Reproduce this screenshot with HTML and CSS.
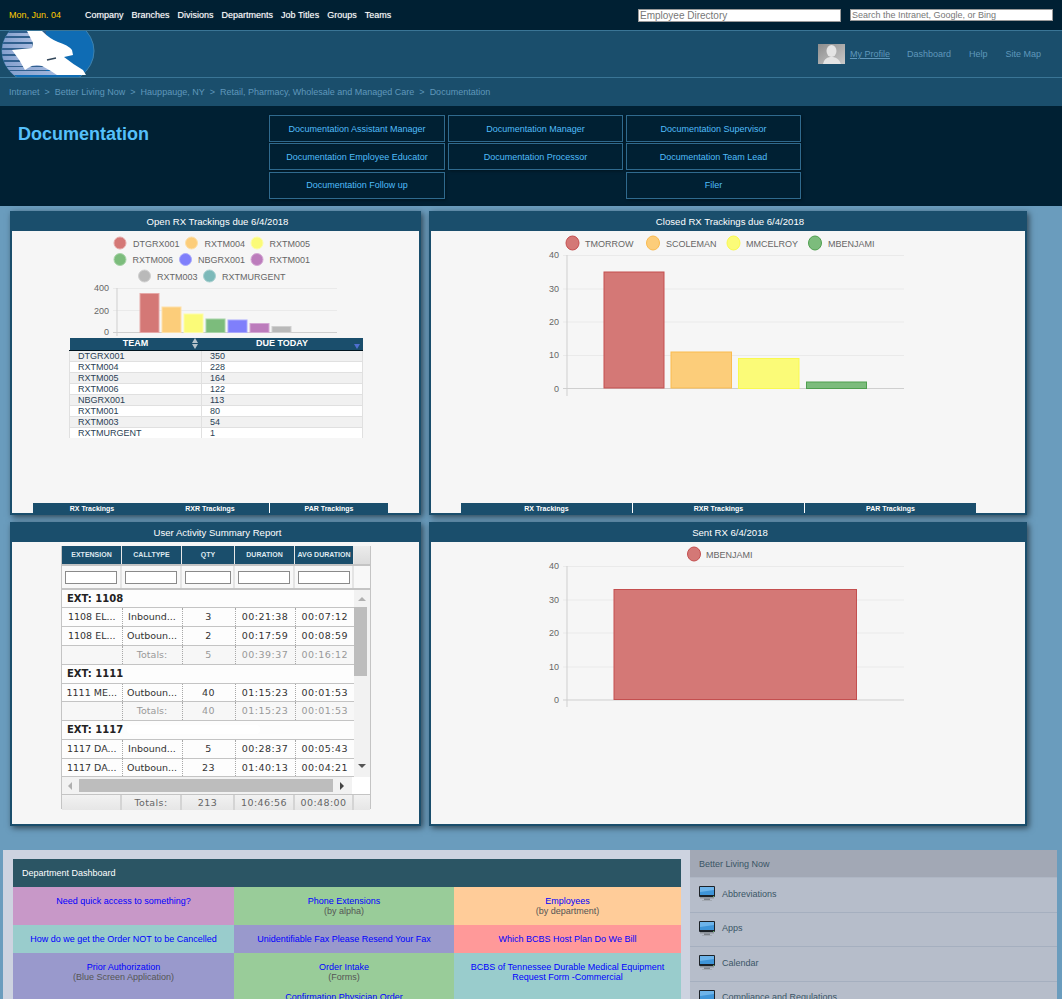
FILE: index.html
```html
<!DOCTYPE html>
<html lang="en">
<head>
    <meta charset="UTF-8">
    <meta name="viewport" content="width=device-width, initial-scale=1.0">
    <title>Documentation</title>
    <link rel="stylesheet" href="styles.css">
</head>
<body>
    <svg class="defs" width="0" height="0">
        <symbol id="monitor" viewBox="0 0 16 15">
            <rect x="0" y="0" width="16" height="11" rx="1" fill="#1c2228"/>
            <rect x="1" y="1" width="14" height="8" fill="#3f95d8"/>
            <path d="M1 1h14v3L1 6z" fill="#6db4ea"/>
            <rect x="14" y="10" width="1" height="1" fill="#5fb05f"/>
            <rect x="1" y="11" width="14" height="1.5" fill="#8f959c"/>
            <rect x="5" y="12.5" width="6" height="1.5" fill="#7c828a"/>
            <rect x="3" y="14" width="10" height="1" fill="#a3a9b2"/>
        </symbol>
    </svg>

    <div class="page">
        <div class="topbar">
            <span class="date">Mon, Jun. 04</span>
            <nav class="topnav">
                <a href="#">Company</a>
                <a href="#">Branches</a>
                <a href="#">Divisions</a>
                <a href="#">Departments</a>
                <a href="#">Job Titles</a>
                <a href="#">Groups</a>
                <a href="#">Teams</a>
            </nav>
            <input class="search search-emp" type="text" value="Employee Directory">
            <input class="search search-web" type="text" value="Search the Intranet, Google, or Bing">
        </div>

        <div class="brandbar">
            <svg class="logo" width="100" height="46" viewBox="0 31 100 46">
                <defs>
                    <clipPath id="logo-clip"><ellipse cx="48" cy="51" rx="46" ry="36"/></clipPath>
                    <linearGradient id="stripe" x1="0" y1="0" x2="1" y2="0">
                        <stop offset="0" stop-color="#7f9ccb"/>
                        <stop offset="1" stop-color="#a9bce0"/>
                    </linearGradient>
                </defs>
                <ellipse cx="48" cy="51" rx="46" ry="36" fill="#0f6cb4" stroke="#3f82ad"/>
                <g clip-path="url(#logo-clip)">
                    <rect x="0" y="31" width="46" height="44" fill="#2f5f8e"/>
                    <rect x="0" y="71" width="68" height="4" fill="#2f5f8e"/>
                    <g fill="url(#stripe)">
                        <rect x="0" y="33" width="32" height="3"/>
                        <rect x="0" y="38" width="32" height="4"/>
                        <rect x="0" y="44" width="32" height="4"/>
                        <rect x="0" y="50" width="28" height="4"/>
                        <rect x="0" y="56" width="32" height="4"/>
                        <rect x="0" y="62" width="44" height="4"/>
                        <rect x="0" y="67" width="60" height="3"/>
                        <rect x="0" y="71" width="68" height="4"/>
                    </g>
                </g>
                <path d="M27 31 L42 31 Q50 39 58 42 Q68 45 72 50 L73 55 L64 57 Q74 65 83 70 L86 75 L57 75 Q48 69 42 66 Q35 63 28 68 L25 70 Q20 60 12 50 L32 48 L33 43z" fill="#fff"/>
                <path d="M47 60 L56 58" stroke="#33475a" stroke-width="1.5"/>
            </svg>
            <div class="usernav">
                <svg class="avatar" width="27" height="20" viewBox="0 0 27 20">
                    <defs>
                        <linearGradient id="avatar-bg" x1="0" y1="0" x2="1" y2="1">
                            <stop offset="0" stop-color="#8d8d8d"/>
                            <stop offset="1" stop-color="#c9c9c9"/>
                        </linearGradient>
                    </defs>
                    <rect width="27" height="20" fill="url(#avatar-bg)"/>
                    <ellipse cx="13.5" cy="7" rx="5" ry="6" fill="#e4e4e4"/>
                    <path d="M5 20 Q6 14 12 13 L15 13 Q21 14 23 20z" fill="#e4e4e4"/>
                </svg>
                <a class="profile" href="#">My Profile</a>
                <a href="#">Dashboard</a>
                <a href="#">Help</a>
                <a href="#">Site Map</a>
            </div>
        </div>

        <div class="crumbs">
            <a href="#">Intranet</a><span>&gt;</span><a href="#">Better Living Now</a><span>&gt;</span><a href="#">Hauppauge, NY</a><span>&gt;</span><a href="#">Retail, Pharmacy, Wholesale and Managed Care</a><span>&gt;</span><a href="#">Documentation</a>
        </div>

        <div class="pagehead">
            <h1>Documentation</h1>
            <div class="rolegrid">
                <a href="#">Documentation Assistant Manager</a>
                <a href="#">Documentation Manager</a>
                <a href="#">Documentation Supervisor</a>
                <a href="#">Documentation Employee Educator</a>
                <a href="#">Documentation Processor</a>
                <a href="#">Documentation Team Lead</a>
                <a class="row3" href="#">Documentation Follow up</a>
                <span class="row3"></span>
                <a class="row3" href="#">Filer</a>
            </div>
        </div>

        <div class="panels">
            <section class="panel">
                <h2>Open RX Trackings due 6/4/2018</h2>
                <div class="panel-body">
                    <svg class="chart" width="407" height="107" viewBox="12 231 407 107">
                        <g class="legend">
                            <circle class="c1" cx="120" cy="243" r="6"/><text x="133" y="247">DTGRX001</text>
                            <circle class="c2" cx="191.500" cy="243" r="6"/><text x="204.500" y="247">RXTM004</text>
                            <circle class="c3" cx="257" cy="243" r="6"/><text x="269.500" y="247">RXTM005</text>
                            <circle class="c4" cx="120" cy="259.500" r="6"/><text x="132.500" y="263">RXTM006</text>
                            <circle class="c5" cx="185.500" cy="259.500" r="6"/><text x="198" y="263">NBGRX001</text>
                            <circle class="c6" cx="257" cy="259.500" r="6"/><text x="269.500" y="263">RXTM001</text>
                            <circle class="c7" cx="144.500" cy="276" r="6"/><text x="157" y="280">RXTM003</text>
                            <circle class="c8" cx="209.500" cy="276" r="6"/><text x="222" y="280">RXTMURGENT</text>
                        </g>
                        <g class="grid">
                            <line x1="113" y1="288.500" x2="337" y2="288.500"/>
                            <line x1="113" y1="310.500" x2="337" y2="310.500"/>
                        </g>
                        <g class="axis">
                            <line x1="117" y1="288" x2="117" y2="336"/>
                            <line x1="113" y1="332.500" x2="337" y2="332.500"/>
                        </g>
                        <g class="ticks" text-anchor="end">
                            <text x="109" y="291">400</text>
                            <text x="109" y="314">200</text>
                            <text x="109" y="335">0</text>
                        </g>
                        <rect class="c1" x="140" y="293.500" width="19" height="39"/>
                        <rect class="c2" x="162" y="307" width="19" height="25.500"/>
                        <rect class="c3" x="184" y="314" width="19" height="18.500"/>
                        <rect class="c4" x="206" y="319" width="19" height="13.500"/>
                        <rect class="c5" x="228" y="320" width="19" height="12.500"/>
                        <rect class="c6" x="250" y="323.500" width="19" height="9"/>
                        <rect class="c7" x="272" y="326.500" width="19" height="6"/>
                    </svg>
                    <table class="teams">
                        <thead>
                            <tr>
                                <th class="team-col">TEAM<span class="sort-both"></span></th>
                                <th>DUE TODAY<span class="sort-down"></span></th>
                            </tr>
                        </thead>
                        <tbody>
                            <tr><td>DTGRX001</td><td>350</td></tr>
                            <tr><td>RXTM004</td><td>228</td></tr>
                            <tr><td>RXTM005</td><td>164</td></tr>
                            <tr><td>RXTM006</td><td>122</td></tr>
                            <tr><td>NBGRX001</td><td>113</td></tr>
                            <tr><td>RXTM001</td><td>80</td></tr>
                            <tr><td>RXTM003</td><td>54</td></tr>
                            <tr><td>RXTMURGENT</td><td>1</td></tr>
                        </tbody>
                    </table>
                    <div class="tabs tabs-left">
                        <a href="#">RX Trackings</a>
                        <a href="#">RXR Trackings</a>
                        <a href="#">PAR Trackings</a>
                    </div>
                </div>
            </section>

            <section class="panel">
                <h2>Closed RX Trackings due 6/4/2018</h2>
                <div class="panel-body">
                    <svg class="chart" width="593" height="170" viewBox="431 231 593 170">
                        <g class="legend">
                            <ellipse class="c1 solid" cx="572.500" cy="243" rx="6.500" ry="7"/><text x="585" y="247">TMORROW</text>
                            <ellipse class="c2 solid" cx="653" cy="243" rx="6.500" ry="7"/><text x="666" y="247">SCOLEMAN</text>
                            <ellipse class="c3 solid" cx="733.500" cy="243" rx="6.500" ry="7"/><text x="746" y="247">MMCELROY</text>
                            <ellipse class="c4 solid" cx="815" cy="243" rx="6.500" ry="7"/><text x="828" y="247">MBENJAMI</text>
                        </g>
                        <g class="grid">
                            <line x1="563" y1="255.500" x2="904" y2="255.500"/>
                            <line x1="563" y1="289" x2="904" y2="289"/>
                            <line x1="563" y1="322" x2="904" y2="322"/>
                            <line x1="563" y1="355.500" x2="904" y2="355.500"/>
                        </g>
                        <g class="axis">
                            <line x1="567" y1="255" x2="567" y2="396"/>
                            <line x1="563" y1="388.500" x2="904" y2="388.500"/>
                        </g>
                        <g class="ticks" text-anchor="end">
                            <text x="559" y="258">40</text>
                            <text x="559" y="292">30</text>
                            <text x="559" y="325">20</text>
                            <text x="559" y="358">10</text>
                            <text x="559" y="392">0</text>
                        </g>
                        <rect class="c1 solid" x="604" y="272" width="60" height="116"/>
                        <rect class="c2 solid" x="671" y="352" width="60.500" height="36"/>
                        <rect class="c3 solid" x="738.500" y="358.500" width="60.500" height="30"/>
                        <rect class="c4 solid" x="806.500" y="382" width="60" height="6.500"/>
                    </svg>
                    <div class="tabs tabs-right">
                        <a href="#">RX Trackings</a>
                        <a href="#">RXR Trackings</a>
                        <a href="#">PAR Trackings</a>
                    </div>
                </div>
            </section>

            <section class="panel">
                <h2>User Activity Summary Report</h2>
                <div class="panel-body">
                    <div class="report">
                        <div class="report-head">
                            <span>EXTENSION</span><span>CALLTYPE</span><span class="qty">QTY</span><span>DURATION</span><span>AVG DURATION</span>
                        </div>
                        <div class="report-filter">
                            <span><input type="text"></span><span><input type="text"></span><span class="qty"><input type="text"></span><span><input type="text"></span><span><input type="text"></span>
                        </div>
                        <div class="report-main">
                            <table class="calls">
                                <colgroup>
                                    <col class="col-wide"><col class="col-wide"><col class="col-qty"><col class="col-wide"><col class="col-last">
                                </colgroup>
                                <tr class="group"><td colspan="5">EXT: 1108</td></tr>
                                <tr><td>1108 EL...</td><td>Inbound...</td><td>3</td><td>00:21:38</td><td>00:07:12</td></tr>
                                <tr><td>1108 EL...</td><td>Outboun...</td><td>2</td><td>00:17:59</td><td>00:08:59</td></tr>
                                <tr class="subtotal"><td></td><td>Totals:</td><td>5</td><td>00:39:37</td><td>00:16:12</td></tr>
                                <tr class="group"><td colspan="5">EXT: 1111</td></tr>
                                <tr><td>1111 ME...</td><td>Outboun...</td><td>40</td><td>01:15:23</td><td>00:01:53</td></tr>
                                <tr class="subtotal"><td></td><td>Totals:</td><td>40</td><td>01:15:23</td><td>00:01:53</td></tr>
                                <tr class="group"><td colspan="5">EXT: 1117<span class="blur-out"></span></td></tr>
                                <tr><td>1117 DA...</td><td>Inbound...</td><td>5</td><td>00:28:37</td><td>00:05:43</td></tr>
                                <tr><td>1117 DA...</td><td>Outboun...</td><td>23</td><td>01:40:13</td><td>00:04:21</td></tr>
                            </table>
                            <div class="vscroll">
                                <span class="arrow-up"></span>
                                <span class="vthumb"></span>
                                <span class="arrow-down"></span>
                            </div>
                        </div>
                        <div class="hscroll">
                            <span class="arrow-left"></span>
                            <span class="hthumb"></span>
                            <span class="arrow-right"></span>
                        </div>
                        <div class="report-foot">
                            <span></span><span>Totals:</span><span class="qty">213</span><span>10:46:56</span><span>00:48:00</span>
                        </div>
                    </div>
                </div>
            </section>

            <section class="panel">
                <h2>Sent RX 6/4/2018</h2>
                <div class="panel-body">
                    <svg class="chart" width="593" height="195" viewBox="431 542 593 195">
                        <g class="legend">
                            <ellipse class="c1 solid" cx="694" cy="554" rx="6.500" ry="7"/><text x="706" y="558">MBENJAMI</text>
                        </g>
                        <g class="grid">
                            <line x1="563" y1="566.500" x2="904" y2="566.500"/>
                            <line x1="563" y1="600" x2="904" y2="600"/>
                            <line x1="563" y1="633" x2="904" y2="633"/>
                            <line x1="563" y1="667" x2="904" y2="667"/>
                        </g>
                        <g class="axis">
                            <line x1="567" y1="566" x2="567" y2="707"/>
                            <line x1="563" y1="700" x2="904" y2="700"/>
                        </g>
                        <g class="ticks" text-anchor="end">
                            <text x="559" y="569">40</text>
                            <text x="559" y="603">30</text>
                            <text x="559" y="636">20</text>
                            <text x="559" y="670">10</text>
                            <text x="559" y="703">0</text>
                        </g>
                        <rect class="c1 solid" x="614" y="589.500" width="242.500" height="110"/>
                    </svg>
                </div>
            </section>
        </div>

        <div class="lower">
            <div class="dept">
                <div class="dept-title">Department Dashboard</div>
                <div class="dept-grid">
                    <div class="cell purple short"><a href="#">Need quick access to something?</a></div>
                    <div class="cell green short"><a href="#">Phone Extensions</a><small>(by alpha)</small></div>
                    <div class="cell orange short"><a href="#">Employees</a><small>(by department)</small></div>
                    <div class="cell teal thin"><a href="#">How do we get the Order NOT to be Cancelled</a></div>
                    <div class="cell indigo thin"><a href="#">Unidentifiable Fax Please Resend Your Fax</a></div>
                    <div class="cell salmon thin"><a href="#">Which BCBS Host Plan Do We Bill</a></div>
                    <div class="cell indigo"><a href="#">Prior Authorization</a><small>(Blue Screen Application)</small></div>
                    <div class="cell green"><a href="#">Order Intake</a><small>(Forms)</small><a class="next" href="#">Confirmation Physician Order</a></div>
                    <div class="cell teal"><a href="#">BCBS of Tennessee Durable Medical Equipment Request Form -Commercial</a></div>
                </div>
            </div>
            <aside class="side">
                <div class="side-title">Better Living Now</div>
                <a href="#"><svg width="16" height="15"><use href="#monitor"/></svg>Abbreviations</a>
                <a href="#"><svg width="16" height="15"><use href="#monitor"/></svg>Apps</a>
                <a href="#"><svg width="16" height="15"><use href="#monitor"/></svg>Calendar</a>
                <a href="#"><svg width="16" height="15"><use href="#monitor"/></svg>Compliance and Regulations</a>
            </aside>
        </div>
    </div>
</body>
</html>
```

FILE: styles.css
```css
html, body {
    margin: 0;
    padding: 0;
}
body {
    font-family: "Liberation Sans", Arial, sans-serif;
    font-size: 9px;
    background-color: #6a9cbd;
}
a {
    text-decoration: none;
}
.defs {
    display: block;
    height: 0;
}
.page {
    height: 999px;
    overflow: hidden;
}

/* top */
.topbar {
    display: flex;
    align-items: center;
    height: 30px;
    padding-left: 9px;
    background-color: #002033;
    border-bottom: 1px solid #3a7596;
}
.date {
    width: 76px;
    color: #ffcc00;
}
.topnav {
    display: flex;
    gap: 8px;
    flex: 1;
}
.topnav a {
    color: #fff;
    text-shadow: 0 0 1px rgba(255, 255, 255, 0.5);
}
.search {
    box-sizing: border-box;
    align-self: flex-start;
    width: 203px;
    margin-top: 9px;
    padding: 0 0 0 1px;
    border: 1px solid #999;
    background-color: #fff;
    color: #777;
    font-family: "Liberation Sans", Arial, sans-serif;
    border-radius: 0;
}
.search-emp {
    height: 13px;
    font-size: 10px;
    line-height: 11px;
}
.search-web {
    height: 12px;
    margin-left: 9px;
    margin-right: 9px;
    font-size: 9px;
    line-height: 10px;
}
.brandbar {
    display: flex;
    justify-content: space-between;
    align-items: center;
    height: 46px;
    background-color: #1a4e6c;
    border-bottom: 1px solid #3a7596;
}
.logo {
    display: block;
}
.usernav {
    display: flex;
    align-items: center;
    padding-right: 21px;
}
.usernav a {
    margin-left: 18px;
    color: #5f97bb;
}
.usernav .profile {
    margin-left: 5px;
    text-decoration: underline;
}
.usernav .profile + a {
    margin-left: 17px;
}
.crumbs {
    display: flex;
    align-items: center;
    height: 28px;
    padding-left: 9px;
    background-color: #1a4e6c;
    color: #5f97bb;
}
.crumbs a {
    color: #5f97bb;
}
.crumbs span {
    margin: 0 5px;
}
.pagehead {
    display: flex;
    height: 100px;
    background-color: #002033;
}
.pagehead h1 {
    width: 251px;
    margin: 18px 0 0 18px;
    color: #55c0fb;
    font-size: 18px;
    line-height: 20px;
}
.rolegrid {
    display: grid;
    grid-template-columns: 176px 175px 175px;
    grid-template-rows: 28px 28px 28px;
    column-gap: 3px;
    margin-top: 9px;
}
.rolegrid a {
    display: flex;
    justify-content: center;
    align-items: center;
    box-sizing: border-box;
    height: 27px;
    border: 1px solid #2f6a8e;
    color: #50bdfa;
    box-shadow: 1px 1px 3px rgba(0, 0, 0, 0.4);
}
.rolegrid .row3 {
    margin-top: 1px;
    padding-bottom: 1px;
}

/* panels */
.panels {
    display: grid;
    grid-template-columns: 411px 598px;
    grid-template-rows: 304px 304px;
    gap: 7px 8px;
    margin-left: 10px;
    padding-top: 5px;
}
.panel {
    display: flex;
    flex-direction: column;
    box-sizing: border-box;
    border: 2px solid #1a4e6c;
    border-top: 0;
    background-color: #f6f6f6;
    box-shadow: 2px 2px 6px rgba(0, 0, 0, 0.55);
}
.panel h2 {
    margin: 0 -2px;
    height: 20px;
    padding-left: 4px;
    background-color: #1a4e6c;
    color: #fff;
    font-size: 9.600px;
    font-weight: normal;
    line-height: 21px;
    text-align: center;
}
.panel-body {
    position: relative;
    display: flex;
    flex-direction: column;
    flex: 1;
}
.chart {
    display: block;
}
.legend text {
    fill: #666;
    font-size: 9px;
}
.ticks text {
    fill: #666;
    font-size: 9px;
}
.grid line {
    stroke: #eaeaea;
    stroke-width: 1;
}
.axis line {
    stroke: #cfcfcf;
    stroke-width: 1;
}
.c1 { fill: #d47876; stroke: #e6a9a8; }
.c2 { fill: #fccd7a; stroke: #fde0a8; }
.c3 { fill: #fbfb78; stroke: #fdfda8; }
.c4 { fill: #7cbc7c; stroke: #a8d4a8; }
.c5 { fill: #7f7ffb; stroke: #a9a9fc; }
.c6 { fill: #bc7cbc; stroke: #d4a8d4; }
.c7 { fill: #b9b9b9; stroke: #d0d0d0; }
.c8 { fill: #7cb9b9; stroke: #a8d0d0; }
.c1.solid { stroke: #c44f4f; }
.c2.solid { stroke: #fabb4f; }
.c3.solid { stroke: #f9f94f; }
.c4.solid { stroke: #4f9f4f; }

/* team table */
.teams {
    width: 294px;
    margin-left: 57px;
    border-collapse: collapse;
    table-layout: fixed;
    font-size: 9px;
    color: #2b3f55;
}
.teams th {
    position: relative;
    height: 12px;
    padding: 0;
    vertical-align: top;
    background-color: #1a4e6c;
    border-bottom: 1px solid #00141f;
    color: #fff;
    font-size: 9px;
    line-height: 11px;
}
.team-col {
    width: 132px;
}
.teams td {
    height: 10px;
    padding: 0 0 0 8px;
    border: 1px solid #e0e0e0;
    border-top: 0;
    line-height: 10px;
    background-color: #fff;
}
.teams tbody tr:nth-child(odd) td {
    background-color: #f1f1f1;
}
.teams tbody tr:last-child td {
    border-bottom: 0;
}
.sort-both {
    position: absolute;
    right: 4px;
    top: 0;
    display: flex;
    flex-direction: column;
    gap: 1px;
}
.sort-both::before, .sort-both::after {
    content: "";
    width: 0;
    height: 0;
    border-left: 3px solid transparent;
    border-right: 3px solid transparent;
}
.sort-both::before {
    border-bottom: 5px solid #b4c2ca;
}
.sort-both::after {
    border-top: 5px solid #b4c2ca;
}
.sort-down {
    position: absolute;
    right: 3px;
    top: 6px;
    width: 0;
    height: 0;
    border-left: 3px solid transparent;
    border-right: 3px solid transparent;
    border-top: 5px solid #4f6fd0;
}
.tabs {
    position: absolute;
    bottom: 0;
    display: flex;
    height: 10px;
    background-color: #1a4e6c;
}
.tabs a {
    flex: 1;
    color: #fff;
    font-size: 7px;
    font-weight: bold;
    line-height: 11px;
    text-align: center;
}
.tabs-left {
    left: 21px;
    width: 355px;
}
.tabs-right {
    left: 30px;
    width: 515px;
}
.tabs a + a {
    border-left: 1px solid #fff;
}
.tabs-left a + a {
    border-left: 0;
}
.tabs-left a:last-child {
    border-left: 1px solid #fff;
}

/* call report */
.report {
    box-sizing: border-box;
    width: 310px;
    height: 263px;
    margin: 4px 0 0 49px;
    border: 1px solid #c4c4c4;
    border-width: 0 1px 1px;
    background-color: #f4f4f4;
    font-family: "DejaVu Sans", Verdana, sans-serif;
    font-size: 9.500px;
    color: #333;
}
.report-head, .report-filter, .report-foot {
    display: grid;
    grid-template-columns: 60px 60px 53px 60px 59px;
}
.report-head {
    height: 18px;
    border-bottom: 2px solid #c4c4c4;
    background: linear-gradient(#ececec, #dcdcdc);
}
.report-head span {
    box-sizing: border-box;
    border-right: 1px solid #e8e8e8;
    background-color: #1a4e6c;
    color: #dfe9f0;
    font-family: "Liberation Sans", Arial, sans-serif;
    font-size: 7px;
    font-weight: bold;
    line-height: 18px;
    text-align: center;
}
.report-filter {
    height: 22px;
    border-bottom: 2px solid #c4c4c4;
    background-color: #f8f8f8;
}
.report-filter span {
    display: flex;
    justify-content: center;
    align-items: center;
    border-right: 2px solid #e4e4e4;
}
.report-filter input {
    box-sizing: border-box;
    width: 52px;
    height: 13px;
    padding: 0;
    border: 1px solid #8a8a8a;
    background-color: #fff;
}
.report-filter .qty input {
    width: 46px;
}
.report-main {
    display: flex;
    height: 187px;
    background-color: #fff;
}
.calls {
    width: 292px;
    height: 187px;
    border-collapse: collapse;
    table-layout: fixed;
}
.col-wide { width: 60px; }
.col-qty { width: 53px; }
.col-last { width: 59px; }
.calls td {
    height: 18px;
    padding: 0;
    border-bottom: 1px solid #c4c4c4;
    border-right: 1px dotted #a8a8a8;
    text-align: center;
    line-height: 16px;
    background-color: #fdfdfd;
}
.calls tr:nth-child(1) td,
.calls tr:nth-child(6) td,
.calls tr:nth-child(10) td {
    height: 17px;
}
.calls td:nth-child(5) { border-right: 0; }
.calls td:nth-child(n+3) { letter-spacing: 0.5px; }
.group td {
    padding-left: 5px;
    font-size: 10px;
    font-weight: bold;
    text-align: left;
    color: #222;
    border-right: 0;
}
.subtotal td {
    color: #999;
    background-color: #f7f7f7;
}
.blur-out {
    display: inline-block;
    width: 133px;
    height: 9px;
    margin-left: 4px;
    vertical-align: -1px;
    background-color: #fff;
    border-radius: 4px;
}
.vscroll {
    display: flex;
    flex-direction: column;
    align-items: center;
    flex: 1;
    background-color: #f2f2f2;
}
.vthumb {
    align-self: flex-start;
    width: 13px;
    height: 69px;
    margin: 6px 0 auto;
    background-color: #bdbdbd;
}
.arrow-up, .arrow-down {
    width: 0;
    height: 0;
    border-left: 4px solid transparent;
    border-right: 4px solid transparent;
}
.arrow-up {
    margin-top: 7px;
    border-bottom: 4px solid #b0b0b0;
}
.arrow-down {
    margin-bottom: 9px;
    border-top: 4px solid #555;
}
.hscroll {
    display: flex;
    align-items: center;
    height: 17px;
    padding: 0 0 0 6px;
    background: linear-gradient(90deg, #f2f2f2 94%, #fff 94%);
    box-sizing: border-box;
}
.hthumb {
    width: 254px;
    height: 13px;
    margin: 0 7px;
    background-color: #bdbdbd;
}
.arrow-left, .arrow-right {
    width: 0;
    height: 0;
    border-top: 4px solid transparent;
    border-bottom: 4px solid transparent;
}
.arrow-left {
    border-right: 4px solid #b0b0b0;
}
.arrow-right {
    border-left: 4px solid #444;
}
.report-foot {
    height: 15px;
    border-top: 1px solid #c4c4c4;
    background: linear-gradient(#f2f2f2, #e6e6e6);
    color: #666;
    letter-spacing: 0.4px;
    line-height: 15px;
    text-align: center;
}
.report-foot span {
    border-right: 2px solid #d4d4d4;
}

/* bottom section */
.lower {
    display: flex;
    height: 160px;
    margin: 24px 5px 0 3px;
}
.dept {
    width: 687px;
    box-sizing: border-box;
    padding: 9px 9px 0 10px;
    background-color: #cdd3e0;
}
.dept-title {
    height: 28px;
    padding-left: 9px;
    background-color: #2b5564;
    color: #fff;
    line-height: 28px;
}
.dept-grid {
    display: grid;
    grid-template-columns: 221px 220px 227px;
    grid-template-rows: 38px 28px 60px;
}
.cell {
    padding: 9px 10px 0;
    color: #555;
    line-height: 10px;
    text-align: center;
}
.cell a {
    display: block;
    color: #0000ff;
}
.cell small {
    display: block;
    font-size: 9px;
}
.cell .next {
    margin-top: 10px;
}
.cell.thin {
    padding-top: 9px;
}
.purple { background-color: #c898c8; }
.green { background-color: #99cc99; }
.orange { background-color: #ffcc99; }
.teal { background-color: #99cccc; }
.indigo { background-color: #9999cc; }
.salmon { background-color: #ff9999; }
.side {
    flex: 1;
    background-color: #b6bdca;
}
.side-title {
    box-sizing: border-box;
    height: 28px;
    padding-left: 9px;
    background-color: #a2a8b5;
    color: #3a5566;
    line-height: 28px;
    border-bottom: 1px solid #aeb6c4;
}
.side a {
    display: flex;
    align-items: center;
    gap: 7px;
    box-sizing: border-box;
    height: 34.500px;
    padding: 0 0 2px 9px;
    border-bottom: 1px solid #a5afbf;
    color: #3a5566;
}
```
